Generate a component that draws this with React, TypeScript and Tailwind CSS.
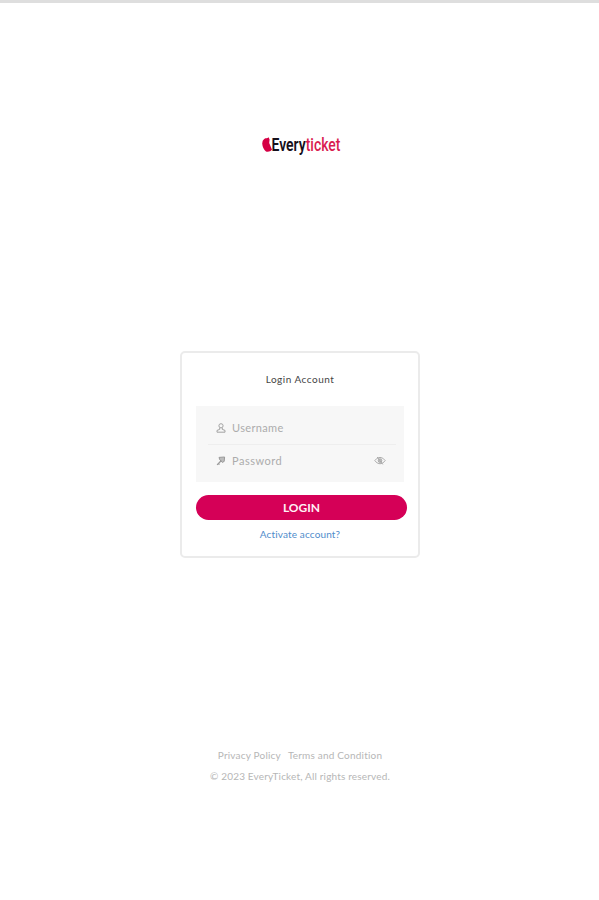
import { useState } from "react";

const Logo = () => (
    <svg width="84" height="28" viewBox="0 0 84 28" role="img" aria-label="Everyticket">
        <path d="M3.2 5 L4.4 4.2 Q6.2 4.8 7.6 3.2 L8.6 5.6 L8.2 9 L11 15.7 L9.6 17 Q7.2 18.2 5 17.6 Q1.6 14.5 1.2 9.5 Q1.2 6 3.2 5Z" fill="#d50045" />
        <text
            x="10.5"
            y="17"
            textLength="69"
            lengthAdjust="spacingAndGlyphs"
            fontFamily="'Roboto', 'Liberation Sans', sans-serif"
            fontSize="17.5"
            fontWeight="600"
            fill="#16101a"
        >
            Every<tspan fill="#d91c50" fontWeight="500">ticket</tspan>
        </text>
    </svg>
);

const UserIcon = () => (
    <svg width="10" height="10" viewBox="0 0 10 10" fill="none" stroke="#a2a2a2" strokeWidth="1">
        <circle cx="5" cy="2.8" r="2.1" />
        <path d="M3.7 5v1.4L1 7.4v1.8h8V7.4L6.3 6.4V5" />
    </svg>
);

const KeyIcon = () => (
    <svg width="10" height="10" viewBox="0 0 10 10" fill="none" stroke="#9a9a9a" strokeWidth="1">
        <path d="M3 1.4l5.6-.4-.4 4.4-1.9 1L3.8 3.8z" fill="#bdbdbd" />
        <path d="M5.4 4.5L1.1 8.9M2.3 7.5l1.2 1" strokeWidth="1.3" />
    </svg>
);

const EyeOffIcon = () => (
    <svg width="12" height="10" viewBox="0 0 12 10" fill="none" stroke="#aaa" strokeWidth="1">
        <path d="M.8 4.6Q3 1.4 6 1.4T11.2 4.6Q9 7.8 6 7.8T.8 4.6Z" />
        <circle cx="6" cy="4.6" r="1.8" fill="#c0c0c0" />
        <path d="M3.2 1l5.6 7.4" />
    </svg>
);

export default function App() {
    const [showPassword, setShowPassword] = useState(false);

    return (
        <main className="flex h-[900px] w-full flex-col items-center border-t-[3px] border-[#dedede] bg-white font-['Lato','Open_Sans',sans-serif]">
            <header className="mt-[131px] ml-[7px] h-7">
                <Logo />
            </header>

            <form
                onSubmit={(e) => e.preventDefault()}
                className="mt-[189px] ml-px flex h-[207px] w-[240px] flex-col rounded-[5px] border-2 border-[#ebebeb] px-3.5"
            >
                <h1 className="mt-5 text-center text-[10px] leading-3 tracking-[0.5px] text-[#444]">Login Account</h1>

                <div className="mt-[21px] h-[76px] w-[208px] bg-[#f7f7f7] pr-2 pl-3">
                    <label className="flex h-[39px] items-center border-b border-[#eee] pt-1.5 pl-2">
                        <UserIcon />
                        <input
                            type="text"
                            placeholder="Username"
                            className="ml-1.5 w-32 text-[11px] leading-4 tracking-[0.35px] text-[#777] outline-none placeholder:text-[#acacac]"
                        />
                    </label>
                    <div className="flex h-[31px] items-center pl-2">
                        <KeyIcon />
                        <input
                            type={showPassword ? "text" : "password"}
                            placeholder="Password"
                            className="ml-1.5 w-32 text-[11px] leading-4 tracking-[0.5px] text-[#777] outline-none placeholder:text-[#acacac]"
                        />
                        <button type="button" aria-label="Show password" className="ml-3.5" onClick={() => setShowPassword(!showPassword)}>
                            <EyeOffIcon />
                        </button>
                    </div>
                </div>

                <button type="submit" className="mt-[13px] h-[25px] w-[211px] shrink-0 rounded-full bg-[#d50057] text-[12px] leading-none font-bold text-[#fff0f6]">
                    LOGIN
                </button>
                <a href="#" className="mt-2 text-center text-[10px] leading-3 tracking-[0.15px] text-[#4f8ccb]">Activate account?</a>
            </form>

            <footer className="mt-[191px] ml-px flex flex-col items-center text-[10px] leading-3 text-[#b6b6b6]">
                <nav className="flex gap-[7px] tracking-[0.2px]">
                    <a href="#">Privacy Policy</a>
                    <a href="#">Terms and Condition</a>
                </nav>
                <p className="mt-[9px] tracking-[0.17px]">© 2023 EveryTicket, All rights reserved.</p>
            </footer>
        </main>
    );
}
